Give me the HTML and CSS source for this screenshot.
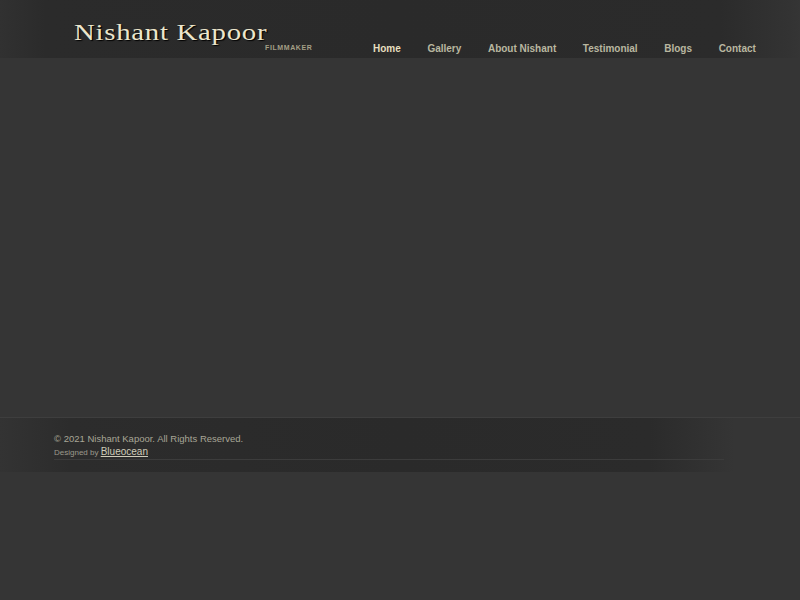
FILE: index.html
```html
<!DOCTYPE html>
<html>
<head>
<meta charset="utf-8">
<title>Nishant Kapoor</title>
<link rel="stylesheet" href="styles.css">
</head>
<body>
<header class="header">
  <div class="brand">
    <div class="brand-name">Nishant Kapoor</div>
    <div class="brand-tag">FILMMAKER</div>
  </div>
  <nav class="nav">
    <a class="nav-link active" href="#">Home</a>
    <a class="nav-link" href="#">Gallery</a>
    <a class="nav-link" href="#">About Nishant</a>
    <a class="nav-link" href="#">Testimonial</a>
    <a class="nav-link" href="#">Blogs</a>
    <a class="nav-link" href="#">Contact</a>
  </nav>
</header>
<main class="main"></main>
<footer class="footer">
  <div class="footer-inner">
    <p class="copy">© 2021 Nishant Kapoor. All Rights Reserved.</p>
    <p class="credit">Designed by <a class="credit-link" href="#">Blueocean</a></p>
  </div>
</footer>
</body>
</html>
```
FILE: styles.css
```css
html, body {
  margin: 0;
  padding: 0;
}
body {
  background: #353535;
  font-family: "Liberation Sans", Arial, sans-serif;
  width: 800px;
  height: 600px;
  overflow: hidden;
}
.header {
  height: 58px;
  display: flex;
  align-items: flex-start;
  background: linear-gradient(to right, #313131 0, #2b2b2b 45px, #2a2a2a 400px, #2b2b2b 720px, #333333 790px, #353535 800px);
}
.brand {
  padding-left: 74px;
  padding-top: 18px;
  width: 291px;
}
.brand-name {
  font-family: "Liberation Serif", "Times New Roman", serif;
  font-size: 24px;
  letter-spacing: 0.6px;
  line-height: 28px;
  color: #ece6cc;
  text-shadow: 1px 1px 1px #000;
  transform: scaleX(1.2);
  transform-origin: left center;
  white-space: nowrap;
}
.brand-tag {
  font-size: 7px;
  font-weight: bold;
  letter-spacing: 0.6px;
  color: #a49f86;
  margin-left: 191px;
  margin-top: -2px;
  line-height: 8px;
}
.nav {
  display: flex;
  gap: 26.6px;
  margin-left: 8px;
  padding-top: 43px;
}
.nav-link {
  font-size: 10px;
  font-weight: bold;
  line-height: 12px;
  color: #b9b7a0;
  text-decoration: none;
}
.nav-link.active {
  color: #e6dfbf;
}
.main {
  height: 359px;
}
.footer {
  height: 55px;
  background: linear-gradient(to right, #333333 0, #2c2c2c 70px, #2a2a2a 400px, #2b2b2b 650px, #353535 735px);
  border-top: 1px solid #3e3e3e;
  box-sizing: border-box;
}
.footer-inner {
  margin-left: 54px;
  padding-top: 15px;
  border-bottom: 1px solid #3c3c3c;
  width: 670px;
  height: 26px;
}
.copy {
  margin: 0;
  font-size: 9.5px;
  line-height: 12px;
  color: #a8a696;
}
.credit {
  margin: 1px 0 0;
  font-size: 8px;
  line-height: 12px;
  color: #9c9a8c;
}
.credit-link {
  font-size: 10px;
  color: #cfccba;
  text-decoration: underline;
}
```
